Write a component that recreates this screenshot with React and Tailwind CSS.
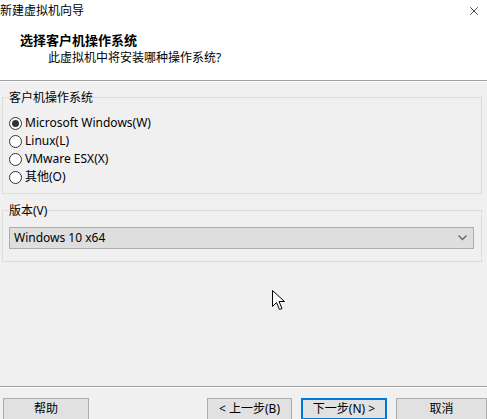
import { X } from 'lucide-react'

const FONT = { fontFamily: '"Noto Sans", "Noto Sans CJK SC", sans-serif' }

const OS_LIST = [
  { label: 'Microsoft Windows(W)', checked: true },
  { label: 'Linux(L)' },
  { label: 'VMware ESX(X)' },
  { label: '其他(O)' },
]

function Radio({ label, checked }) {
  return (
    <div className="flex h-[18px] items-center gap-[3px]">
      <span className="flex h-[13px] w-[13px] items-center justify-center rounded-full border border-[#333] bg-white">
        {checked && <span className="h-[7px] w-[7px] rounded-full bg-[#333]" />}
      </span>
      <span className="text-[12px] text-black">{label}</span>
    </div>
  )
}

function Button({ children, primary }) {
  return (
    <button
      className={
        'h-[22px] bg-[#e1e1e1] text-[12px] text-black leading-none ' +
        (primary ? 'border-2 border-[#0078d7]' : 'border border-[#adadad]')
      }
    >
      {children}
    </button>
  )
}

function Cursor() {
  return (
    <svg className="absolute left-[272px] top-[290px]" width="14" height="22" viewBox="0 0 14 22">
      <path
        d="M0.5 0.5 L0.5 16.5 L4.5 12.5 L7.5 19.5 L10 18.5 L7 11.5 L12.5 11.5 Z"
        fill="#fff"
        stroke="#000"
        strokeWidth="1"
        strokeLinejoin="round"
      />
    </svg>
  )
}

export default function App() {
  return (
    <div className="relative flex h-[419px] w-[487px] flex-col overflow-hidden bg-[#f0f0f0]" style={FONT}>
      {/* title bar + header */}
      <div className="bg-white">
        <div className="flex h-[22px] items-center justify-between pr-[6px]">
          <span className="text-[12px] text-black">新建虚拟机向导</span>
          <X size={14} strokeWidth={1.2} className="text-black" />
        </div>
        <div className="h-[58px] pt-[10px]">
          <div className="pl-[20px] text-[13px] font-bold leading-[17px] text-black">选择客户机操作系统</div>
          <div className="pl-[48px] text-[12px] leading-[17px] text-black">此虚拟机中将安装哪种操作系统?</div>
        </div>
      </div>
      <div className="h-px bg-[#a0a0a0]" />
      <div className="h-px bg-white" />

      {/* body */}
      <div className="flex-1 px-[2px] pt-[7px]">
        <fieldset className="w-[480px] border border-[#dcdcdc] px-[6px] pb-[7px]">
          <legend className="text-[12px] leading-[17px] text-black">客户机操作系统</legend>
          <div className="mt-[8px] flex flex-col">
            {OS_LIST.map(o => (
              <Radio key={o.label} label={o.label} checked={o.checked} />
            ))}
          </div>
        </fieldset>

        <fieldset className="mt-[8px] w-[480px] border border-[#dcdcdc] px-[6px] pb-[12px]">
          <legend className="text-[12px] leading-[17px] text-black">版本(V)</legend>
          <div className="mt-[8px] flex h-[22px] w-[465px] items-center justify-between border border-[#adadad] bg-[#dedede] pl-[4px] pr-[6px]">
            <span className="text-[12px] text-black">Windows 10 x64</span>
            <svg width="9" height="6" viewBox="0 0 9 6">
              <path d="M0.5 0.5 L4.5 4.5 L8.5 0.5" fill="none" stroke="#666" strokeWidth="1.3" />
            </svg>
          </div>
        </fieldset>
      </div>

      {/* footer */}
      <div className="h-px bg-[#a0a0a0]" />
      <div className="h-px bg-white" />
      <div className="flex h-[31px] items-start pt-[7px]">
        <div className="ml-[3px] w-[84px]">
          <Button>
            <span className="block w-[84px]">帮助</span>
          </Button>
        </div>
        <div className="ml-[120px] flex gap-[9px]">
          <div className="w-[85px]"><Button><span className="block w-[83px]">&lt; 上一步(B)</span></Button></div>
          <div className="w-[86px]"><Button primary><span className="block w-[82px]">下一步(N) &gt;</span></Button></div>
          <div className="w-[91px]"><Button><span className="block w-[89px]">取消</span></Button></div>
        </div>
      </div>

      <Cursor />
    </div>
  )
}
